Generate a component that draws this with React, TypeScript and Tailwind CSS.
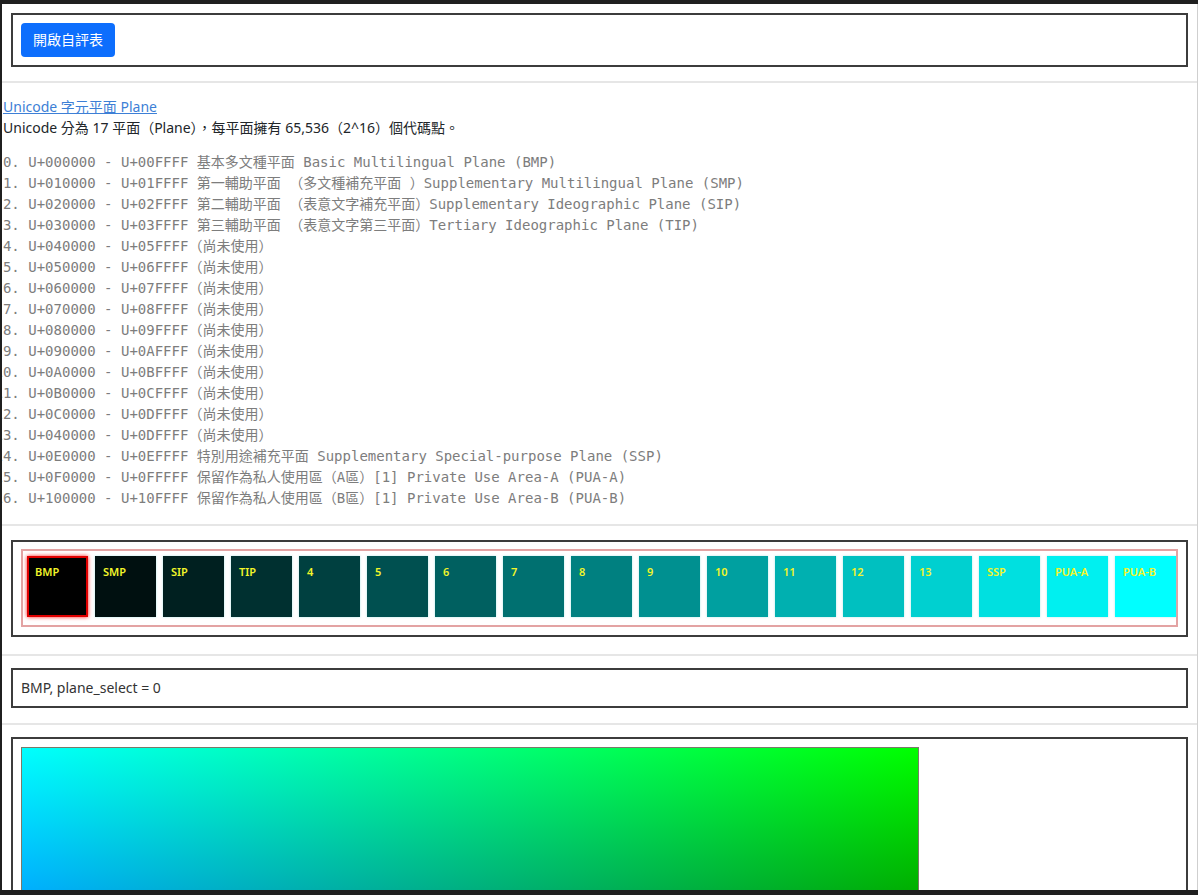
import React from 'react';

const planeLines: string[] = [
  'U+000000 - U+00FFFF 基本多文種平面 Basic Multilingual Plane (BMP)',
  'U+010000 - U+01FFFF 第一輔助平面 （多文種補充平面 ）Supplementary Multilingual Plane (SMP)',
  'U+020000 - U+02FFFF 第二輔助平面 （表意文字補充平面）Supplementary Ideographic Plane (SIP)',
  'U+030000 - U+03FFFF 第三輔助平面 （表意文字第三平面）Tertiary Ideographic Plane (TIP)',
  'U+040000 - U+05FFFF（尚未使用）',
  'U+050000 - U+06FFFF（尚未使用）',
  'U+060000 - U+07FFFF（尚未使用）',
  'U+070000 - U+08FFFF（尚未使用）',
  'U+080000 - U+09FFFF（尚未使用）',
  'U+090000 - U+0AFFFF（尚未使用）',
  'U+0A0000 - U+0BFFFF（尚未使用）',
  'U+0B0000 - U+0CFFFF（尚未使用）',
  'U+0C0000 - U+0DFFFF（尚未使用）',
  'U+040000 - U+0DFFFF（尚未使用）',
  'U+0E0000 - U+0EFFFF 特別用途補充平面 Supplementary Special-purpose Plane (SSP)',
  'U+0F0000 - U+0FFFFF 保留作為私人使用區（A區）[1] Private Use Area-A (PUA-A)',
  'U+100000 - U+10FFFF 保留作為私人使用區（B區）[1] Private Use Area-B (PUA-B)',
];

const planes = [
  'BMP', 'SMP', 'SIP', 'TIP', '4', '5', '6', '7', '8', '9', '10', '11', '12', '13', 'SSP', 'PUA-A', 'PUA-B',
];

// plane i -> rgb(0, i*16, i*16), capped at 255
const planeColor = (i: number) => {
  const v = Math.min(255, i * 16);
  return `rgb(0, ${v}, ${v})`;
};

export default function App() {
  const planeSelect = 0;

  return (
    <div className="h-[895px] w-full overflow-hidden bg-[#1f1f1f] pt-[4px] pb-[5px] pl-[2px]">
      <div className="h-full overflow-hidden border-r border-[#cfcfcf] bg-white font-['Noto_Sans','Noto_Sans_CJK_TC',sans-serif] text-[14px] text-[#212529]">
        {/* toolbar */}
        <div className="px-[9px] pt-[9px]">
          <div className="border-2 border-[#3c3c3c] p-[8px]">
            <button className="h-[34px] rounded-[4px] bg-[#0d6efd] px-[12px] text-[14px] leading-[20px] text-white">
              開啟自評表
            </button>
          </div>
        </div>

        <hr className="mt-[14px] border-t-2 border-[#e6e6e6]" />

        {/* intro */}
        <div className="mt-[13px] pl-[1px] leading-[21px]">
          <a href="#" className="text-[#3d7fd6] underline">
            Unicode 字元平面 Plane
          </a>
          <div>Unicode 分為 17 平面（Plane），每平面擁有 65,536（2^16）個代碼點。</div>
        </div>

        <div className="mt-[14px] pl-[1px] font-['DejaVu_Sans_Mono','Noto_Sans_CJK_TC',monospace] text-[14px] leading-[21px] text-[#7d7d7d]">
          {planeLines.map((line, i) => (
            <div key={i} className="flex whitespace-pre">
              {/* numbers are right-aligned; two-digit ones run off the left edge */}
              <span className="flex w-[16.8px] shrink-0 justify-end">
                <span>{i}.</span>
              </span>
              <span> {line}</span>
            </div>
          ))}
        </div>

        <hr className="mt-[15px] border-t-2 border-[#e6e6e6]" />

        {/* plane picker */}
        <div className="mx-[9px] mt-[14px] border-2 border-[#3c3c3c] px-[8px] pt-[7px] pb-[8px]">
          <div className="inline-flex gap-[7px] border-2 border-[#e3a3a3] pt-[5px] pr-0 pb-[8px] pl-[4px]">
            {planes.map((name, i) => (
              <div
                key={name}
                className={`h-[61px] w-[61px] border-2 px-[6px] pt-[6px] text-[11px] font-semibold leading-[15px] text-[#f2f52a] ${
                  i === planeSelect
                    ? 'border-[#e00000] shadow-[0_0_4px_#ff2020]'
                    : 'border-transparent shadow-[0_0_2px_rgba(120,220,220,0.6)]'
                }`}
                style={{ backgroundColor: planeColor(i) }}
              >
                {name}
              </div>
            ))}
          </div>
        </div>

        <hr className="mt-[17px] border-t-2 border-[#e6e6e6]" />

        <div className="mx-[9px] mt-[12px] border-2 border-[#3c3c3c] px-[8px] py-[7px] leading-[22px] text-[#333]">
          {planes[planeSelect]}, plane_select = {planeSelect}
        </div>

        <hr className="mt-[15px] border-t-2 border-[#e6e6e6]" />

        {/* code point map */}
        <div className="mx-[9px] mt-[12px] border-2 border-[#3c3c3c] p-[8px]">
          <div className="h-[456px] w-[898px] border border-[#7a7a6a] bg-[linear-gradient(to_right,#0000ff,#000000),linear-gradient(to_bottom,#00ff00,#000000)] bg-blend-screen" />
        </div>
      </div>
    </div>
  );
}
